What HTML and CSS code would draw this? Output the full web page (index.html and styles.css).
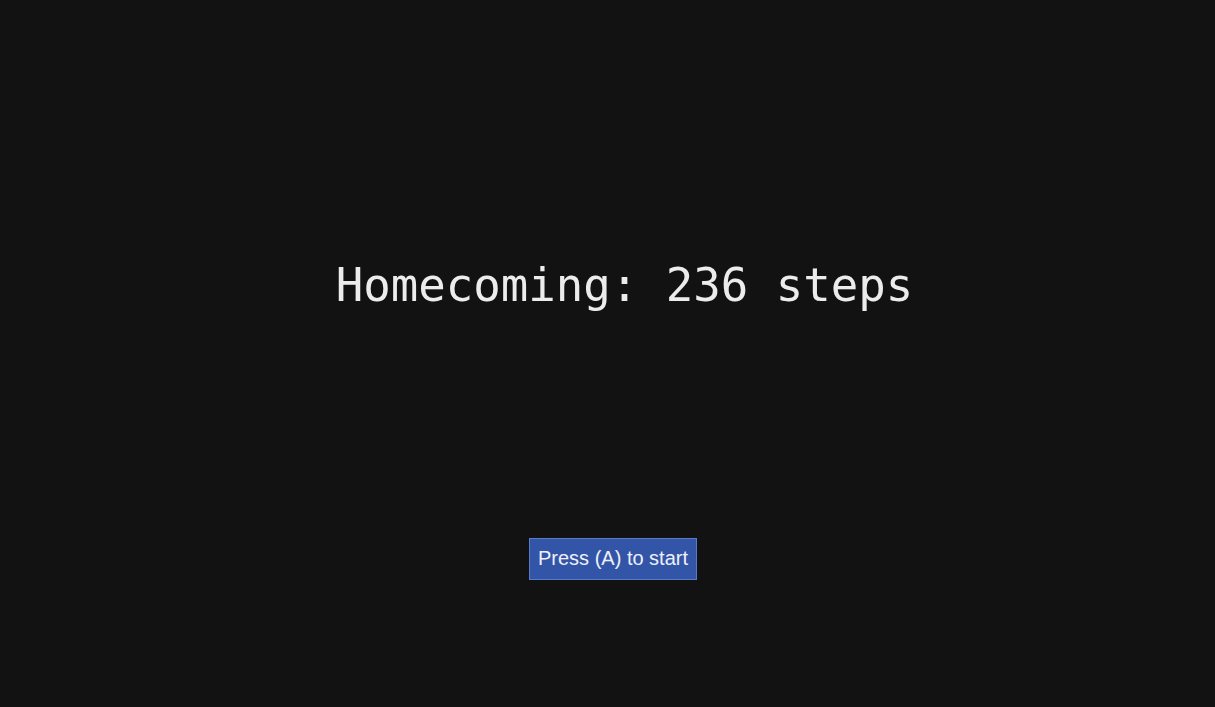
FILE: index.html
```html
<!DOCTYPE html>
<html lang="en">
<head>
  <meta charset="UTF-8" />
  <meta name="viewport" content="width=device-width, initial-scale=1.0"/>
  <title>Homecoming</title>
  <link rel="stylesheet" href="styles.css">
</head>
<body>
  <div class="screen">
    <div class="title">Homecoming: 236 steps</div>
    <button class="start-btn">Press (A) to start</button>
  </div>
</body>
</html>
```

FILE: styles.css
```css
html, body {
  margin: 0;
  height: 100%;
  background-color: #121212;
}
.screen {
  display: flex;
  flex-direction: column;
  align-items: center;
  height: 100%;
}
.title {
  margin-top: 258px;
  margin-left: 34px;
  font-family: "DejaVu Sans Mono", "Liberation Mono", monospace;
  font-size: 45.7px;
  line-height: 56px;
  color: #ececec;
  filter: blur(0.5px);
}
.start-btn {
  margin-top: 224px;
  margin-left: 11px;
  height: 42px;
  padding: 0 8px 2px;
  background: #3355a8;
  border: 1px solid #5a7acc;
  color: #eef0f8;
  font-family: "Liberation Sans", Arial, sans-serif;
  font-size: 20px;
  border-radius: 0;
}
```
